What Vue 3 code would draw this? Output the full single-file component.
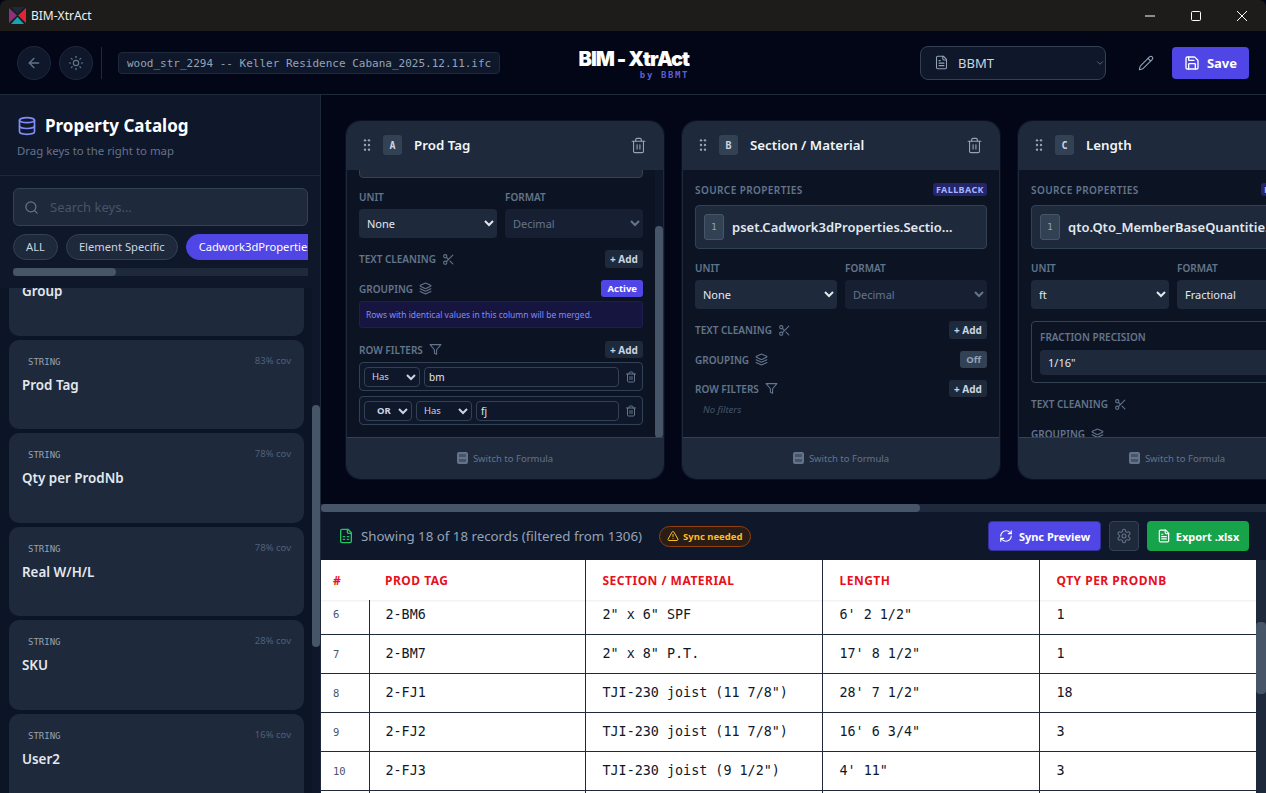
<script setup>
import { h } from 'vue';

const file = ['M15 2H6a2 2 0 0 0-2 2v16a2 2 0 0 0 2 2h12a2 2 0 0 0 2-2V7Z', 'M14 2v4a2 2 0 0 0 2 2h4'];

const paths = {
  arrowLeft: ['m12 19-7-7 7-7', 'M19 12H5'],
  sun: ['M12 8a4 4 0 1 0 0 8 4 4 0 0 0 0-8z', 'M12 2v2', 'M12 20v2', 'm4.93 4.93 1.41 1.41', 'm17.66 17.66 1.41 1.41', 'M2 12h2', 'M20 12h2', 'm6.34 17.66-1.41 1.41', 'm19.07 4.93-1.41 1.41'],
  database: ['M3 5a9 3 0 1 0 18 0a9 3 0 1 0-18 0', 'M3 5v14a9 3 0 0 0 18 0V5', 'M3 12a9 3 0 0 0 18 0'],
  trash: ['M3 6h18', 'M19 6v14c0 1-1 2-2 2H7c-1 0-2-1-2-2V6', 'M8 6V4c0-1 1-2 2-2h4c1 0 2 1 2 2v2', 'M10 11v6', 'M14 11v6'],
  scissors: ['M6 3a3 3 0 1 0 0 6 3 3 0 0 0 0-6z', 'M6 15a3 3 0 1 0 0 6 3 3 0 0 0 0-6z', 'M8.12 8.12 12 12', 'M20 4 8.12 15.88', 'M14.8 14.8 20 20'],
  layers: ['m12.83 2.18a2 2 0 0 0-1.66 0L2.6 6.08a1 1 0 0 0 0 1.83l8.58 3.91a2 2 0 0 0 1.66 0l8.58-3.9a1 1 0 0 0 0-1.83Z', 'm22 17.65-9.17 4.16a2 2 0 0 1-1.66 0L2 17.65', 'm22 12.65-9.17 4.16a2 2 0 0 1-1.66 0L2 12.65'],
  filter: ['M22 3H2l8 9.46V19l4 2v-8.54L22 3z'],
  search: ['M11 3a8 8 0 1 0 0 16 8 8 0 0 0 0-16z', 'm21 21-4.3-4.3'],
  fileText: [...file, 'M10 9H8', 'M16 13H8', 'M16 17H8'],
  sheet: [...file, 'M8 13h2', 'M14 13h2', 'M8 17h2', 'M14 17h2'],
  pencil: ['M21.174 6.812a1 1 0 0 0-3.986-3.987L3.842 16.174a2 2 0 0 0-.5.83l-1.321 4.352a.5.5 0 0 0 .623.622l4.353-1.32a2 2 0 0 0 .83-.497z', 'm15 5 4 4'],
  save: ['M15.2 3a2 2 0 0 1 1.4.6l3.8 3.8a2 2 0 0 1 .6 1.4V19a2 2 0 0 1-2 2H5a2 2 0 0 1-2-2V5a2 2 0 0 1 2-2z', 'M17 21v-7a1 1 0 0 0-1-1H8a1 1 0 0 0-1 1v7', 'M7 3v4a1 1 0 0 0 1 1h7'],
  alert: ['m21.73 18-8-14a2 2 0 0 0-3.48 0l-8 14A2 2 0 0 0 4 21h16a2 2 0 0 0 1.73-3', 'M12 9v4', 'M12 17h.01'],
  refresh: ['M3 12a9 9 0 0 1 9-9 9.75 9.75 0 0 1 6.74 2.74L21 8', 'M21 3v5h-5', 'M21 12a9 9 0 0 1-9 9 9.75 9.75 0 0 1-6.74-2.74L3 16', 'M8 16H3v5'],
  settings: ['M12.22 2h-.44a2 2 0 0 0-2 2v.18a2 2 0 0 1-1 1.73l-.43.25a2 2 0 0 1-2 0l-.15-.08a2 2 0 0 0-2.73.73l-.22.38a2 2 0 0 0 .73 2.73l.15.1a2 2 0 0 1 1 1.72v.51a2 2 0 0 1-1 1.74l-.15.09a2 2 0 0 0-.73 2.73l.22.38a2 2 0 0 0 2.73.73l.15-.08a2 2 0 0 1 2 0l.43.25a2 2 0 0 1 1 1.73V20a2 2 0 0 0 2 2h.44a2 2 0 0 0 2-2v-.18a2 2 0 0 1 1-1.73l.43-.25a2 2 0 0 1 2 0l.15.08a2 2 0 0 0 2.73-.73l.22-.39a2 2 0 0 0-.73-2.73l-.15-.08a2 2 0 0 1-1-1.74v-.5a2 2 0 0 1 1-1.74l.15-.09a2 2 0 0 0 .73-2.73l-.22-.38a2 2 0 0 0-2.73-.73l-.15.08a2 2 0 0 1-2 0l-.43-.25a2 2 0 0 1-1-1.73V4a2 2 0 0 0-2-2z', 'M12 9a3 3 0 1 0 0 6 3 3 0 0 0 0-6z'],
  grip: ['M9 5h.01', 'M9 12h.01', 'M9 19h.01', 'M15 5h.01', 'M15 12h.01', 'M15 19h.01'],
  chevron: ['m6 9 6 6 6-6'],
};

// small lucide style icon, stroke colour comes from css
const Icon = (props) =>
  h(
    'svg',
    {
      width: props.size || 16,
      height: props.size || 16,
      viewBox: '0 0 24 24',
      fill: 'none',
      stroke: 'currentColor',
      'stroke-width': props.weight || 2,
      'stroke-linecap': 'round',
      'stroke-linejoin': 'round',
    },
    paths[props.name].map((d) => h('path', { d })),
  );
Icon.props = ['name', 'size', 'weight'];

const catalog = [
  { name: 'Group', cov: '' },
  { name: 'Prod Tag', cov: '83% cov' },
  { name: 'Qty per ProdNb', cov: '78% cov' },
  { name: 'Real W/H/L', cov: '78% cov' },
  { name: 'SKU', cov: '28% cov' },
  { name: 'User2', cov: '16% cov' },
];

const rows = [
  { n: 6, tag: '2-BM6', section: '2" x 6" SPF', length: `6' 2 1/2"`, qty: '1' },
  { n: 7, tag: '2-BM7', section: '2" x 8" P.T.', length: `17' 8 1/2"`, qty: '1' },
  { n: 8, tag: '2-FJ1', section: 'TJI-230 joist (11 7/8")', length: `28' 7 1/2"`, qty: '18' },
  { n: 9, tag: '2-FJ2', section: 'TJI-230 joist (11 7/8")', length: `16' 6 3/4"`, qty: '3' },
  { n: 10, tag: '2-FJ3', section: 'TJI-230 joist (9 1/2")', length: `4' 11"`, qty: '3' },
  { n: '', tag: '', section: '', length: '', qty: '' },
];
</script>

<template>
  <div class="app">
    <!-- window title bar -->
    <div class="titlebar">
      <svg class="app-logo" width="17" height="17" viewBox="0 0 17 17">
        <polygon points="0,1 8,8.5 0,16" fill="#8e2f7f" />
        <polygon points="17,1 9,8.5 17,16" fill="#e02433" />
        <polygon points="2,0 15,0 8.5,7" fill="#1b2a3d" />
        <polygon points="2,17 15,17 8.5,10" fill="#16a3b4" />
      </svg>
      <span class="app-name">BIM-XtrAct</span>
      <div class="win-controls">
        <svg width="12" height="12" viewBox="0 0 12 12"><path d="M1 6h10" stroke="#fff" /></svg>
        <svg width="12" height="12" viewBox="0 0 12 12"><rect x="1.5" y="1.5" width="9" height="9" rx="1" fill="none" stroke="#fff" /></svg>
        <svg width="12" height="12" viewBox="0 0 12 12"><path d="M1 1l10 10M11 1 1 11" stroke="#fff" /></svg>
      </div>
    </div>

    <!-- app header -->
    <header class="topbar">
      <div class="top-left">
        <button class="round-btn"><Icon name="arrowLeft" :size="16" /></button>
        <button class="round-btn"><Icon name="sun" :size="16" :weight="1.7" /></button>
        <span class="top-divider"></span>
        <span class="file-name">wood_str_2294 -- Keller Residence Cabana_2025.12.11.ifc</span>
      </div>
      <div class="brand">
        <span class="brand-main">BIM - XtrAct</span>
        <span class="brand-sub">by BBMT</span>
      </div>
      <div class="top-right">
        <div class="profile-select">
          <Icon name="fileText" :size="15" :weight="1.7" />
          <span class="profile-name">BBMT</span>
          <Icon class="profile-chevron" name="chevron" :size="10" />
        </div>
        <Icon class="pencil" name="pencil" :size="16" :weight="1.6" />
        <button class="save-btn"><Icon name="save" :size="16" />Save</button>
      </div>
    </header>

    <div class="workspace">
      <!-- property catalog -->
      <aside class="sidebar">
        <div class="side-head">
          <div class="side-title">
            <Icon class="db-icon" name="database" :size="20" />
            <span>Property Catalog</span>
          </div>
          <p class="side-sub">Drag keys to the right to map</p>
        </div>

        <div class="side-tools">
          <div class="search">
            <Icon name="search" :size="15" />
            <span>Search keys...</span>
          </div>
          <div class="pills">
            <span class="pill">ALL</span>
            <span class="pill">Element Specific</span>
            <span class="pill pill-active">Cadwork3dProperties</span>
          </div>
          <div class="pill-track"><div class="pill-thumb"></div></div>
        </div>

        <div class="side-list">
          <div class="list-clip">
            <div class="list-inner">
              <div v-for="item in catalog" :key="item.name" class="key-card">
                <div class="key-top">
                  <span class="key-type">STRING</span>
                  <span class="key-cov">{{ item.cov }}</span>
                </div>
                <div class="key-name">{{ item.name }}</div>
              </div>
            </div>
          </div>
          <div class="side-track"><div class="side-thumb"></div></div>
        </div>
      </aside>

      <main class="main">
        <div class="columns">
          <!-- A, scrolled down so only the end of the source box shows -->
          <section class="col-card">
            <div class="col-head">
              <Icon class="grip" name="grip" :size="16" :weight="3.6" />
              <span class="col-badge">A</span>
              <span class="col-title">Prod Tag</span>
              <Icon class="col-trash" name="trash" :size="17" :weight="1.6" />
            </div>
            <div class="col-body">
              <div class="col-scroll">
                <div class="col-content scrolled">
                  <div class="source-head"></div>
                  <div class="source-box"></div>
                  <div class="fields">
                    <div>
                      <div class="label field-label">UNIT</div>
                      <select class="sel"><option>None</option></select>
                    </div>
                    <div>
                      <div class="label field-label">FORMAT</div>
                      <select class="sel" disabled><option>Decimal</option></select>
                    </div>
                  </div>
                  <div class="opt-row">
                    <span class="label">TEXT CLEANING</span>
                    <Icon class="opt-icon" name="scissors" :size="13" />
                    <button class="add-btn">+ Add</button>
                  </div>
                  <div class="opt-row short">
                    <span class="label">GROUPING</span>
                    <Icon class="opt-icon" name="layers" :size="13" />
                    <button class="toggle on">Active</button>
                  </div>
                  <div class="info">Rows with identical values in this column will be merged.</div>
                  <div class="opt-row short filters-row">
                    <span class="label">ROW FILTERS</span>
                    <Icon class="opt-icon" name="filter" :size="13" />
                    <button class="add-btn">+ Add</button>
                  </div>
                  <div class="filter">
                    <select class="mini mini-op"><option>Has</option></select>
                    <input class="mini-input" value="bm" />
                    <Icon class="filter-trash" name="trash" :size="12" />
                  </div>
                  <div class="filter second">
                    <select class="mini mini-or"><option>OR</option></select>
                    <select class="mini mini-op"><option>Has</option></select>
                    <input class="mini-input" value="fj" />
                    <Icon class="filter-trash" name="trash" :size="12" />
                  </div>
                </div>
              </div>
              <div class="col-track"><div class="col-thumb"></div></div>
            </div>
            <div class="col-foot">
              <svg width="11" height="12" viewBox="0 0 11 12">
                <rect width="11" height="12" rx="2" fill="#64748b" />
                <rect x="2" y="2" width="7" height="3" fill="#475569" />
                <rect x="2" y="7" width="7" height="3" fill="#475569" />
              </svg>
              Switch to Formula
            </div>
          </section>

          <!-- B -->
          <section class="col-card">
            <div class="col-head">
              <Icon class="grip" name="grip" :size="16" :weight="3.6" />
              <span class="col-badge">B</span>
              <span class="col-title">Section / Material</span>
              <Icon class="col-trash" name="trash" :size="17" :weight="1.6" />
            </div>
            <div class="col-body">
              <div class="col-scroll">
                <div class="col-content">
                  <div class="source-head">
                    <span class="label">SOURCE PROPERTIES</span>
                    <span class="fallback">FALLBACK</span>
                  </div>
                  <div class="source-box">
                    <span class="chip">1</span>
                    <span class="source-name">pset.Cadwork3dProperties.Section.Material</span>
                  </div>
                  <div class="fields">
                    <div>
                      <div class="label field-label">UNIT</div>
                      <select class="sel"><option>None</option></select>
                    </div>
                    <div>
                      <div class="label field-label">FORMAT</div>
                      <select class="sel" disabled><option>Decimal</option></select>
                    </div>
                  </div>
                  <div class="opt-row">
                    <span class="label">TEXT CLEANING</span>
                    <Icon class="opt-icon" name="scissors" :size="13" />
                    <button class="add-btn">+ Add</button>
                  </div>
                  <div class="opt-row short">
                    <span class="label">GROUPING</span>
                    <Icon class="opt-icon" name="layers" :size="13" />
                    <button class="toggle">Off</button>
                  </div>
                  <div class="opt-row short">
                    <span class="label">ROW FILTERS</span>
                    <Icon class="opt-icon" name="filter" :size="13" />
                    <button class="add-btn">+ Add</button>
                  </div>
                  <div class="no-filters">No filters</div>
                </div>
              </div>
            </div>
            <div class="col-foot">
              <svg width="11" height="12" viewBox="0 0 11 12">
                <rect width="11" height="12" rx="2" fill="#64748b" />
                <rect x="2" y="2" width="7" height="3" fill="#475569" />
                <rect x="2" y="7" width="7" height="3" fill="#475569" />
              </svg>
              Switch to Formula
            </div>
          </section>

          <!-- C -->
          <section class="col-card">
            <div class="col-head">
              <Icon class="grip" name="grip" :size="16" :weight="3.6" />
              <span class="col-badge">C</span>
              <span class="col-title">Length</span>
              <Icon class="col-trash" name="trash" :size="17" :weight="1.6" />
            </div>
            <div class="col-body">
              <div class="col-scroll">
                <div class="col-content narrow">
                  <div class="source-head">
                    <span class="label">SOURCE PROPERTIES</span>
                    <span class="fallback">FALLBACK</span>
                  </div>
                  <div class="source-box">
                    <span class="chip">1</span>
                    <span class="source-name">qto.Qto_MemberBaseQuantities.Length</span>
                  </div>
                  <div class="fields">
                    <div>
                      <div class="label field-label">UNIT</div>
                      <select class="sel"><option>ft</option></select>
                    </div>
                    <div>
                      <div class="label field-label">FORMAT</div>
                      <select class="sel"><option>Fractional</option></select>
                    </div>
                  </div>
                  <div class="precision">
                    <div class="label field-label">FRACTION PRECISION</div>
                    <select class="sel sel-small"><option>1/16"</option></select>
                  </div>
                  <div class="opt-row">
                    <span class="label">TEXT CLEANING</span>
                    <Icon class="opt-icon" name="scissors" :size="13" />
                    <button class="add-btn">+ Add</button>
                  </div>
                  <div class="opt-row">
                    <span class="label">GROUPING</span>
                    <Icon class="opt-icon" name="layers" :size="13" />
                    <button class="toggle">Off</button>
                  </div>
                </div>
              </div>
            </div>
            <div class="col-foot">
              <svg width="11" height="12" viewBox="0 0 11 12">
                <rect width="11" height="12" rx="2" fill="#64748b" />
                <rect x="2" y="2" width="7" height="3" fill="#475569" />
                <rect x="2" y="7" width="7" height="3" fill="#475569" />
              </svg>
              Switch to Formula
            </div>
          </section>
        </div>

        <div class="h-track"><div class="h-thumb"></div></div>

        <!-- preview -->
        <section class="preview">
          <div class="preview-bar">
            <Icon class="sheet-icon" name="sheet" :size="16" />
            <span class="records">Showing 18 of 18 records (filtered from 1306)</span>
            <span class="sync-badge"><Icon name="alert" :size="12" />Sync needed</span>
            <span class="bar-space"></span>
            <button class="sync-btn"><Icon name="refresh" :size="14" />Sync Preview</button>
            <button class="gear-btn"><Icon name="settings" :size="16" :weight="1.6" /></button>
            <button class="export-btn"><Icon name="fileText" :size="14" />Export .xlsx</button>
          </div>
          <div class="table-area">
            <div class="table-wrap">
              <table class="grid head-grid">
                <colgroup>
                  <col class="c-n" /><col class="c-a" /><col class="c-b" /><col class="c-c" /><col class="c-d" />
                </colgroup>
                <thead>
                  <tr>
                    <th class="th-n">#</th>
                    <th>PROD TAG</th>
                    <th>SECTION / MATERIAL</th>
                    <th>LENGTH</th>
                    <th>QTY PER PRODNB</th>
                  </tr>
                </thead>
              </table>
              <div class="rows-clip">
                <table class="grid body-grid">
                  <colgroup>
                    <col class="c-n" /><col class="c-a" /><col class="c-b" /><col class="c-c" /><col class="c-d" />
                  </colgroup>
                  <tbody>
                    <tr v-for="row in rows" :key="row.n">
                      <td class="td-n">{{ row.n }}</td>
                      <td>{{ row.tag }}</td>
                      <td>{{ row.section }}</td>
                      <td>{{ row.length }}</td>
                      <td>{{ row.qty }}</td>
                    </tr>
                  </tbody>
                </table>
              </div>
            </div>
            <div class="table-track"><div class="table-thumb"></div></div>
          </div>
        </section>
      </main>
    </div>
  </div>
</template>

<style>
html,
body {
  margin: 0;
  background: #020617;
  overflow: hidden;
}
</style>

<style scoped>
.app {
  width: 1266px;
  height: 793px;
  display: flex;
  flex-direction: column;
  overflow: hidden;
  background: #020617;
  font-family: "Noto Sans", "Open Sans", sans-serif;
  color: #e2e8f0;
}

button {
  font-family: inherit;
  cursor: pointer;
}

/* title bar */
.titlebar {
  height: 31px;
  flex-shrink: 0;
  display: flex;
  align-items: center;
  padding-left: 9px;
  background: #1d1c1a;
  border-radius: 7px 7px 0 0;
}

.app-logo {
  margin-right: 5px;
}

.app-name {
  font-size: 12px;
  color: #f1f1f1;
}

.win-controls {
  margin-left: auto;
  display: flex;
  gap: 34px;
  padding-right: 18px;
}

/* header */
.topbar {
  height: 64px;
  flex-shrink: 0;
  box-sizing: border-box;
  display: grid;
  grid-template-columns: 1fr auto 1fr;
  align-items: center;
  padding: 0 17px;
  background: #020617;
  border-bottom: 1px solid #1e293b;
}

.top-left {
  display: flex;
  align-items: center;
  gap: 8px;
}

.round-btn {
  width: 34px;
  height: 34px;
  padding: 0;
  display: flex;
  align-items: center;
  justify-content: center;
  border-radius: 50%;
  border: 1px solid #1e293b;
  background: #0f172a;
  color: #64748b;
}

.top-divider {
  width: 1px;
  height: 32px;
  margin: 0 8px 0 0;
  background: #1e293b;
}

.file-name {
  height: 22px;
  line-height: 21px;
  box-sizing: border-box;
  padding: 0 8px;
  white-space: nowrap;
  font-family: "DejaVu Sans Mono", monospace;
  font-size: 11px;
  color: #94a3b8;
  background: #0f172a;
  border: 1px solid #1e293b;
  border-radius: 4px;
}

.brand {
  display: flex;
  flex-direction: column;
  align-items: flex-end;
  width: 112px;
  padding-top: 5px;
}

.brand-main {
  font-family: Inter, sans-serif;
  font-weight: 900;
  font-size: 20px;
  line-height: 20px;
  letter-spacing: -1px;
  color: #fff;
  white-space: nowrap;
}

.brand-sub {
  font-family: "DejaVu Sans Mono", monospace;
  font-weight: 700;
  font-size: 9px;
  line-height: 12px;
  letter-spacing: 1.6px;
  color: #5b5fd6;
}

.top-right {
  display: flex;
  align-items: center;
  justify-content: flex-end;
}

.profile-select {
  width: 186px;
  height: 34px;
  box-sizing: border-box;
  display: flex;
  align-items: center;
  padding: 0 0 0 13px;
  background: #0f172a;
  border: 1px solid #334155;
  border-radius: 8px;
  color: #94a3b8;
}

.profile-name {
  margin-left: 9px;
  font-size: 13px;
  color: #cbd5e1;
}

.profile-chevron {
  margin-left: auto;
  color: #64748b;
}

.pencil {
  margin: 0 18px 0 32px;
  color: #94a3b8;
}

.save-btn {
  width: 77px;
  height: 32px;
  display: flex;
  align-items: center;
  justify-content: center;
  gap: 7px;
  padding: 0;
  border: none;
  border-radius: 4px;
  background: #4f46e5;
  color: #fff;
  font-size: 13px;
  font-weight: 700;
}

/* layout */
.workspace {
  flex: 1;
  min-height: 0;
  display: flex;
}

/* sidebar */
.sidebar {
  width: 321px;
  flex-shrink: 0;
  box-sizing: border-box;
  display: flex;
  flex-direction: column;
  border-right: 1px solid #1e293b;
  background: #0b1526;
}

.side-head {
  height: 81px;
  box-sizing: border-box;
  padding: 19px 17px 0;
  background: #0f172a;
  border-bottom: 1px solid #1e293b;
}

.side-title {
  display: flex;
  align-items: center;
  gap: 8px;
  font-size: 17px;
  font-weight: 700;
  line-height: 24px;
  color: #fff;
}

.db-icon {
  color: #818cf8;
}

.side-sub {
  margin: 4px 0 0;
  font-size: 11.4px;
  line-height: 18px;
  color: #64748b;
}

.side-tools {
  height: 112px;
  flex-shrink: 0;
  box-sizing: border-box;
  padding: 12px 12px 0 13px;
  background: #0f172a;
}

.search {
  height: 38px;
  box-sizing: border-box;
  display: flex;
  align-items: center;
  gap: 11px;
  padding-left: 10px;
  background: #1e293b;
  border: 1px solid #334155;
  border-radius: 6px;
  color: #64748b;
  font-size: 13px;
}

.search span {
  color: #475569;
}

.pills {
  display: flex;
  gap: 8px;
  margin-top: 8px;
  overflow: hidden;
}

.pill {
  height: 26px;
  line-height: 24px;
  box-sizing: border-box;
  flex-shrink: 0;
  padding: 0 12px;
  border: 1px solid #334155;
  border-radius: 13px;
  background: #1e293b;
  color: #cbd5e1;
  font-size: 11.2px;
  white-space: nowrap;
}

.pill-active {
  border-color: #4f46e5;
  background: #4f46e5;
  color: #fff;
}

.pill-track {
  height: 8px;
  margin-top: 8px;
  background: #1e293b;
}

.pill-thumb {
  width: 103px;
  height: 8px;
  border-radius: 4px;
  background: #475569;
}

.side-list {
  flex: 1;
  min-height: 0;
  display: flex;
}

.list-clip {
  flex: 1;
  overflow: hidden;
}

.list-inner {
  margin: -42px 8px 0 9px;
}

.key-card {
  height: 89.5px;
  box-sizing: border-box;
  margin-bottom: 4px;
  padding: 15px 13px 0;
  border-radius: 10px;
  background: #1e293b;
}

.key-top {
  display: flex;
  justify-content: space-between;
  height: 14px;
  line-height: 14px;
}

.key-type {
  padding-left: 6px;
  font-family: "DejaVu Sans Mono", monospace;
  font-size: 9px;
  color: #94a3b8;
}

.key-cov {
  margin-top: -1px;
  font-size: 9.5px;
  color: #526078;
}

.key-name {
  margin-top: 7px;
  font-size: 13.4px;
  line-height: 18px;
  font-weight: 600;
  color: #e2e8f0;
}

.side-track {
  width: 8px;
  flex-shrink: 0;
  background: #0f172a;
}

.side-thumb {
  height: 242px;
  margin-top: 117px;
  border-radius: 4px;
  background: #475569;
}

/* main */
.main {
  flex: 1;
  min-width: 0;
  display: flex;
  flex-direction: column;
}

.columns {
  height: 409px;
  flex-shrink: 0;
  box-sizing: border-box;
  display: flex;
  gap: 18px;
  padding: 26px 0 25px 25px;
  overflow: hidden;
}

.col-card {
  width: 318px;
  height: 358px;
  flex-shrink: 0;
  box-sizing: border-box;
  display: flex;
  flex-direction: column;
  overflow: hidden;
  border: 1px solid #1e293b;
  border-radius: 14px;
  background: #0c1424;
  box-shadow: 0 0 0 1px #0b1120;
}

.col-head {
  height: 48px;
  flex-shrink: 0;
  box-sizing: border-box;
  display: flex;
  align-items: center;
  padding: 0 16px 2px 12px;
  background: #1e293b;
}

.grip {
  color: #94a3b8;
}

.col-badge {
  width: 19px;
  height: 20px;
  margin-left: 8px;
  display: flex;
  align-items: center;
  justify-content: center;
  border-radius: 3px;
  background: #334155;
  color: #cbd5e1;
  font-family: "DejaVu Sans Mono", monospace;
  font-size: 10px;
  font-weight: 700;
}

.col-title {
  margin-left: 12px;
  font-size: 13.3px;
  font-weight: 600;
  color: #f1f5f9;
  white-space: nowrap;
}

.col-trash {
  margin-left: auto;
  color: #94a3b8;
}

.col-body {
  flex: 1;
  min-height: 0;
  display: flex;
}

.col-scroll {
  flex: 1;
  min-width: 0;
  overflow: hidden;
}

.col-content {
  padding: 13px 12px;
}

.col-content.narrow {
  padding-right: 20px;
}

.col-content.scrolled {
  margin-top: -71px;
}

.col-track {
  width: 8px;
  flex-shrink: 0;
  background: #0f172a;
}

.col-thumb {
  height: 212px;
  margin-top: 56px;
  border-radius: 4px;
  background: #475569;
}

.label {
  font-size: 10px;
  font-weight: 600;
  line-height: 12px;
  color: #64748b;
  white-space: nowrap;
}

.source-head .label {
  letter-spacing: 0.4px;
}

.source-head {
  height: 13px;
  margin-bottom: 9px;
  display: flex;
  align-items: center;
  justify-content: space-between;
}

.fallback {
  height: 13px;
  line-height: 13px;
  padding: 0 3px;
  border-radius: 3px;
  background: #24256a;
  color: #a5b4fc;
  font-size: 9px;
  font-weight: 700;
  letter-spacing: 0.4px;
}

.source-box {
  height: 44px;
  box-sizing: border-box;
  display: flex;
  align-items: center;
  gap: 8px;
  margin-bottom: 13px;
  padding: 0 33px 0 8px;
  background: #1e293b;
  border: 1px solid #334155;
  border-radius: 4px;
}

.chip {
  width: 20px;
  height: 26px;
  flex-shrink: 0;
  box-sizing: border-box;
  display: flex;
  align-items: center;
  justify-content: center;
  background: #334155;
  border: 1px solid #475569;
  border-radius: 3px;
  color: #94a3b8;
  font-family: "DejaVu Sans Mono", monospace;
  font-size: 9px;
}

.source-name {
  min-width: 0;
  overflow: hidden;
  white-space: nowrap;
  text-overflow: ellipsis;
  font-size: 13px;
  font-weight: 600;
  color: #e2e8f0;
}

.fields {
  display: grid;
  grid-template-columns: 1fr 1fr;
  gap: 8px;
}

.field-label {
  margin-bottom: 6px;
}

.sel {
  display: block;
  width: 100%;
  height: 29px;
  padding: 0 4px;
  border: none;
  border-radius: 4px;
  outline: none;
  background-color: #1e293b;
  color: #e2e8f0;
  font-family: inherit;
  font-size: 11px;
  color-scheme: dark;
}

.sel:disabled {
  background-color: #172033;
  color: #64748b;
  opacity: 1;
}

.sel-small {
  height: 25px;
  padding: 0 4px;
}

.opt-row {
  height: 18px;
  margin-top: 12px;
  display: flex;
  align-items: center;
}

.opt-row.short {
  height: 17px;
}

.filters-row {
  margin-top: 13px !important;
}

.opt-icon {
  margin-left: 6px;
  color: #64748b;
}

.add-btn {
  margin-left: auto;
  height: 18px;
  width: 38px;
  padding: 0;
  border: none;
  border-radius: 3px;
  background: #1e293b;
  color: #cbd5e1;
  font-size: 10px;
  font-weight: 700;
}

.short .add-btn {
  height: 17px;
}

.toggle {
  margin-left: auto;
  height: 17px;
  padding: 0 6px;
  border: none;
  border-radius: 3px;
  background: #334155;
  color: #94a3b8;
  font-size: 9.5px;
  font-weight: 700;
}

.toggle.on {
  background: #4f46e5;
  color: #fff;
}

.info {
  height: 27px;
  line-height: 25px;
  box-sizing: border-box;
  margin-top: 4px;
  padding-left: 6px;
  background: #15153f;
  border: 1px solid #1e1e55;
  border-radius: 3px;
  color: #818cf8;
  font-size: 8.5px;
  white-space: nowrap;
}

.filter {
  height: 29px;
  box-sizing: border-box;
  display: flex;
  align-items: center;
  gap: 4px;
  margin-top: 4px;
  padding: 0 4px;
  background: #0f172a;
  border: 1px solid #334155;
  border-radius: 4px;
}

.filter.second {
  margin-top: 5px;
}

.mini {
  height: 20px;
  box-sizing: border-box;
  border: 1px solid #334155;
  border-radius: 4px;
  outline: none;
  background: #0f172a;
  color: #cbd5e1;
  font-family: inherit;
  font-size: 9.5px;
  color-scheme: dark;
}

.mini-op {
  width: 56px;
  padding-left: 3px;
}

.mini-or {
  width: 48px;
  padding-left: 8px;
  font-weight: 700;
}

.mini-input {
  flex: 1;
  min-width: 0;
  height: 20px;
  box-sizing: border-box;
  padding: 0 4px;
  border: 1px solid #334155;
  border-radius: 4px;
  outline: none;
  background: #0f172a;
  color: #e2e8f0;
  font-family: inherit;
  font-size: 10px;
}

.filter-trash {
  margin: 0 1px 0 2px;
  flex-shrink: 0;
  color: #64748b;
}

.no-filters {
  margin-top: 6px;
  padding-left: 8px;
  font-size: 9.5px;
  line-height: 14px;
  font-style: italic;
  color: #475569;
}

.precision {
  margin-top: 12px;
  height: 62px;
  box-sizing: border-box;
  padding: 9px 8px 0;
  border: 1px solid #334155;
  border-radius: 4px;
}

.precision .field-label {
  margin-bottom: 7px;
}

.col-foot {
  height: 41px;
  flex-shrink: 0;
  box-sizing: border-box;
  display: flex;
  align-items: center;
  justify-content: center;
  gap: 5px;
  background: #1e293b;
  border-top: 1px solid #334155;
  color: #64748b;
  font-size: 9.5px;
}

/* horizontal scrollbar */
.h-track {
  height: 8px;
  flex-shrink: 0;
  background: #1e293b;
}

.h-thumb {
  width: 599px;
  height: 8px;
  border-radius: 4px;
  background: #475569;
}

/* preview */
.preview {
  flex: 1;
  min-height: 0;
  display: flex;
  flex-direction: column;
}

.preview-bar {
  height: 48px;
  flex-shrink: 0;
  box-sizing: border-box;
  display: flex;
  align-items: center;
  padding: 0 17px;
  background: #0f172a;
}

.sheet-icon {
  color: #22c55e;
}

.records {
  margin-left: 7px;
  font-size: 13.3px;
  color: #94a3b8;
  white-space: nowrap;
}

.sync-badge {
  height: 21px;
  box-sizing: border-box;
  display: flex;
  align-items: center;
  gap: 4px;
  margin-left: 17px;
  padding: 0 8px 0 7px;
  border: 1px solid #92400e;
  border-radius: 11px;
  background: #2a1d16;
  color: #fbbf24;
  font-size: 9.5px;
  font-weight: 700;
  white-space: nowrap;
}

.bar-space {
  flex: 1;
}

.sync-btn,
.export-btn,
.gear-btn {
  height: 30px;
  display: flex;
  align-items: center;
  justify-content: center;
  padding: 0;
  border-radius: 4px;
  font-size: 11px;
  font-weight: 700;
  color: #fff;
}

.sync-btn {
  width: 113px;
  gap: 6px;
  border: 1px solid #3730a3;
  background: #4f46e5;
}

.gear-btn {
  width: 30px;
  margin: 0 8px;
  border: 1px solid #334155;
  background: #1e293b;
  color: #64748b;
}

.export-btn {
  width: 102px;
  gap: 5px;
  border: none;
  background: #16a34a;
}

.table-area {
  flex: 1;
  min-height: 0;
  display: flex;
}

.table-wrap {
  flex: 1;
  min-width: 0;
  display: flex;
  flex-direction: column;
  background: #fff;
}

.grid {
  width: 935px;
  table-layout: fixed;
  border-collapse: collapse;
}

.c-n {
  width: 48px;
}
.c-a {
  width: 216px;
}
.c-b {
  width: 237px;
}
.c-c {
  width: 217px;
}
.c-d {
  width: 217px;
}

.head-grid th {
  height: 40px;
  padding: 0 16px 0 17px;
  box-sizing: border-box;
  text-align: left;
  border-right: 1px solid #1e293b;
  color: #e7101c;
  font-size: 12px;
  font-weight: 700;
  letter-spacing: 0.5px;
  white-space: nowrap;
}

.head-grid th:nth-child(2) {
  padding-left: 16px;
}

.head-grid th:last-child {
  border-right: none;
}

.head-grid .th-n {
  padding-left: 12px;
  border-right: none;
}

.head-grid {
  box-shadow: 0 1px 2px rgba(15, 23, 42, 0.08);
  position: relative;
}

.rows-clip {
  flex: 1;
  min-height: 0;
  overflow: hidden;
}

.body-grid {
  margin-top: -5px;
}

.body-grid td {
  height: 39px;
  padding: 0 16px 0 17px;
  box-sizing: border-box;
  border-right: 1px solid #1e293b;
  border-bottom: 1px solid #1e293b;
  font-family: "DejaVu Sans Mono", monospace;
  font-size: 13.4px;
  color: #0f172a;
  white-space: pre;
}

.body-grid td:nth-child(2) {
  padding-left: 16px;
}

.body-grid td:last-child {
  border-right: none;
}

.body-grid .td-n {
  padding-left: 12px;
  font-size: 10.5px;
  color: #475569;
}

.table-track {
  width: 10px;
  flex-shrink: 0;
  background: #1e293b;
}

.table-thumb {
  height: 72px;
  margin-top: 62px;
  border-radius: 4px;
  background: #475569;
}
</style>
